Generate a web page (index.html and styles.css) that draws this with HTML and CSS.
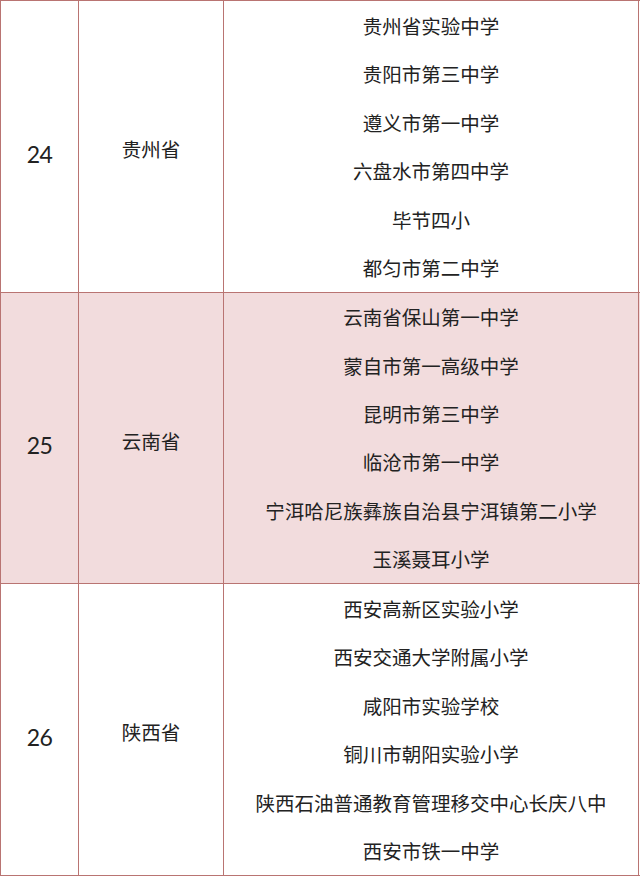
FILE: index.html
```html
<!DOCTYPE html>
<html lang="zh-CN">
<head>
<meta charset="utf-8">
<link rel="stylesheet" href="styles.css">
</head>
<body>
<div class="table">
  <div class="group">
    <div class="cell num">24</div>
    <div class="cell prov">贵州省</div>
    <div class="cell list">
      <div class="item">贵州省实验中学</div>
      <div class="item">贵阳市第三中学</div>
      <div class="item">遵义市第一中学</div>
      <div class="item">六盘水市第四中学</div>
      <div class="item">毕节四小</div>
      <div class="item">都匀市第二中学</div>
    </div>
  </div>
  <div class="group pink">
    <div class="cell num">25</div>
    <div class="cell prov">云南省</div>
    <div class="cell list">
      <div class="item">云南省保山第一中学</div>
      <div class="item">蒙自市第一高级中学</div>
      <div class="item">昆明市第三中学</div>
      <div class="item">临沧市第一中学</div>
      <div class="item">宁洱哈尼族彝族自治县宁洱镇第二小学</div>
      <div class="item">玉溪聂耳小学</div>
    </div>
  </div>
  <div class="group">
    <div class="cell num">26</div>
    <div class="cell prov">陕西省</div>
    <div class="cell list">
      <div class="item">西安高新区实验小学</div>
      <div class="item">西安交通大学附属小学</div>
      <div class="item">咸阳市实验学校</div>
      <div class="item">铜川市朝阳实验小学</div>
      <div class="item">陕西石油普通教育管理移交中心长庆八中</div>
      <div class="item">西安市铁一中学</div>
    </div>
  </div>
</div>
</body>
</html>
```

FILE: styles.css
```css
html, body {
  margin: 0;
  padding: 0;
  background: #ffffff;
}
body {
  font-family: "Noto Sans CJK SC", "Noto Sans", sans-serif;
  color: #222222;
}
.table {
  width: 640px;
  border-top: 1px solid #b97472;
  border-left: 1px solid #b97472;
  box-sizing: border-box;
}
.group {
  display: grid;
  grid-template-columns: 78px 145px 415px;
  border-bottom: 1px solid #b97472;
  height: 291px;
}
.group.pink {
  background: #f2dcdd;
  height: 290px;
}
.cell {
  border-right: 1px solid #b97472;
  display: flex;
  align-items: center;
  justify-content: center;
}
.num {
  font-family: "Lato", "Open Sans", sans-serif;
  font-size: 23px;
  letter-spacing: -0.5px;
  padding-top: 14px;
  box-sizing: border-box;
}
.prov {
  font-size: 19.5px;
  padding-top: 4px;
  box-sizing: border-box;
}
.list {
  flex-direction: column;
  align-items: stretch;
  justify-content: space-evenly;
}
.item {
  flex: 1;
  display: flex;
  align-items: center;
  justify-content: center;
  font-size: 19.5px;
  line-height: 1;
}
```
